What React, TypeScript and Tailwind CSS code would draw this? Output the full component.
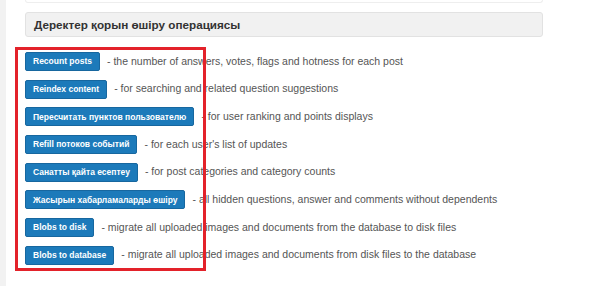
import React from 'react';

type Operation = {
  label: string;
  description: string;
};

const operations: Operation[] = [
  {
    label: 'Recount posts',
    description: '- the number of answers, votes, flags and hotness for each post',
  },
  {
    label: 'Reindex content',
    description: '- for searching and related question suggestions',
  },
  {
    label: 'Пересчитать пунктов пользователю',
    description: '- for user ranking and points displays',
  },
  {
    label: 'Refill потоков событий',
    description: "- for each user's list of updates",
  },
  {
    label: 'Санатты қайта есептеу',
    description: '- for post categories and category counts',
  },
  {
    label: 'Жасырын хабарламаларды өшіру',
    description: '- all hidden questions, answer and comments without dependents',
  },
  {
    label: 'Blobs to disk',
    description: '- migrate all uploaded images and documents from the database to disk files',
  },
  {
    label: 'Blobs to database',
    description: '- migrate all uploaded images and documents from disk files to the database',
  },
];

const OperationRow: React.FC<{ op: Operation }> = ({ op }) => (
  <div className="flex items-center h-[19px]">
    <button
      type="button"
      className="h-[19px] px-[7px] rounded-[2px] bg-[#1c7aba] border border-[#17679f] text-white font-bold text-[8.5px] leading-none whitespace-nowrap"
    >
      {op.label}
    </button>
    <span className="ml-[7px] text-[10.5px] text-[#555] whitespace-nowrap">
      {op.description}
    </span>
  </div>
);

export default function App() {
  return (
    <div
      className="relative flex w-[600px] h-[286px] bg-white overflow-hidden"
      style={{ fontFamily: '"Liberation Sans", Arial, sans-serif' }}
    >
      <div className="w-[6px] bg-[#f2f2f2] shrink-0" />

      <div className="flex flex-col pl-[19px] w-[537px]">
        <div className="h-[3px] border-x border-b border-[#eeeeee] rounded-b-[3px]" />

        <div className="mt-[9px] h-[25px] flex items-center px-[8px] bg-[#f1f1f1] border border-[#e2e2e2] rounded-[3px]">
          <h2 className="text-[11.7px] font-bold text-[#333]">
            Деректер қорын өшіру операциясы
          </h2>
        </div>

        <div className="mt-[15px] flex flex-col gap-[8.7px]">
          {operations.map((op) => (
            <OperationRow key={op.label} op={op} />
          ))}
        </div>
      </div>

      {/* annotation frame drawn over the list */}
      <div className="absolute left-[15px] top-[47px] w-[191px] h-[224px] border-[3px] border-[#e3222a] pointer-events-none" />
    </div>
  );
}
